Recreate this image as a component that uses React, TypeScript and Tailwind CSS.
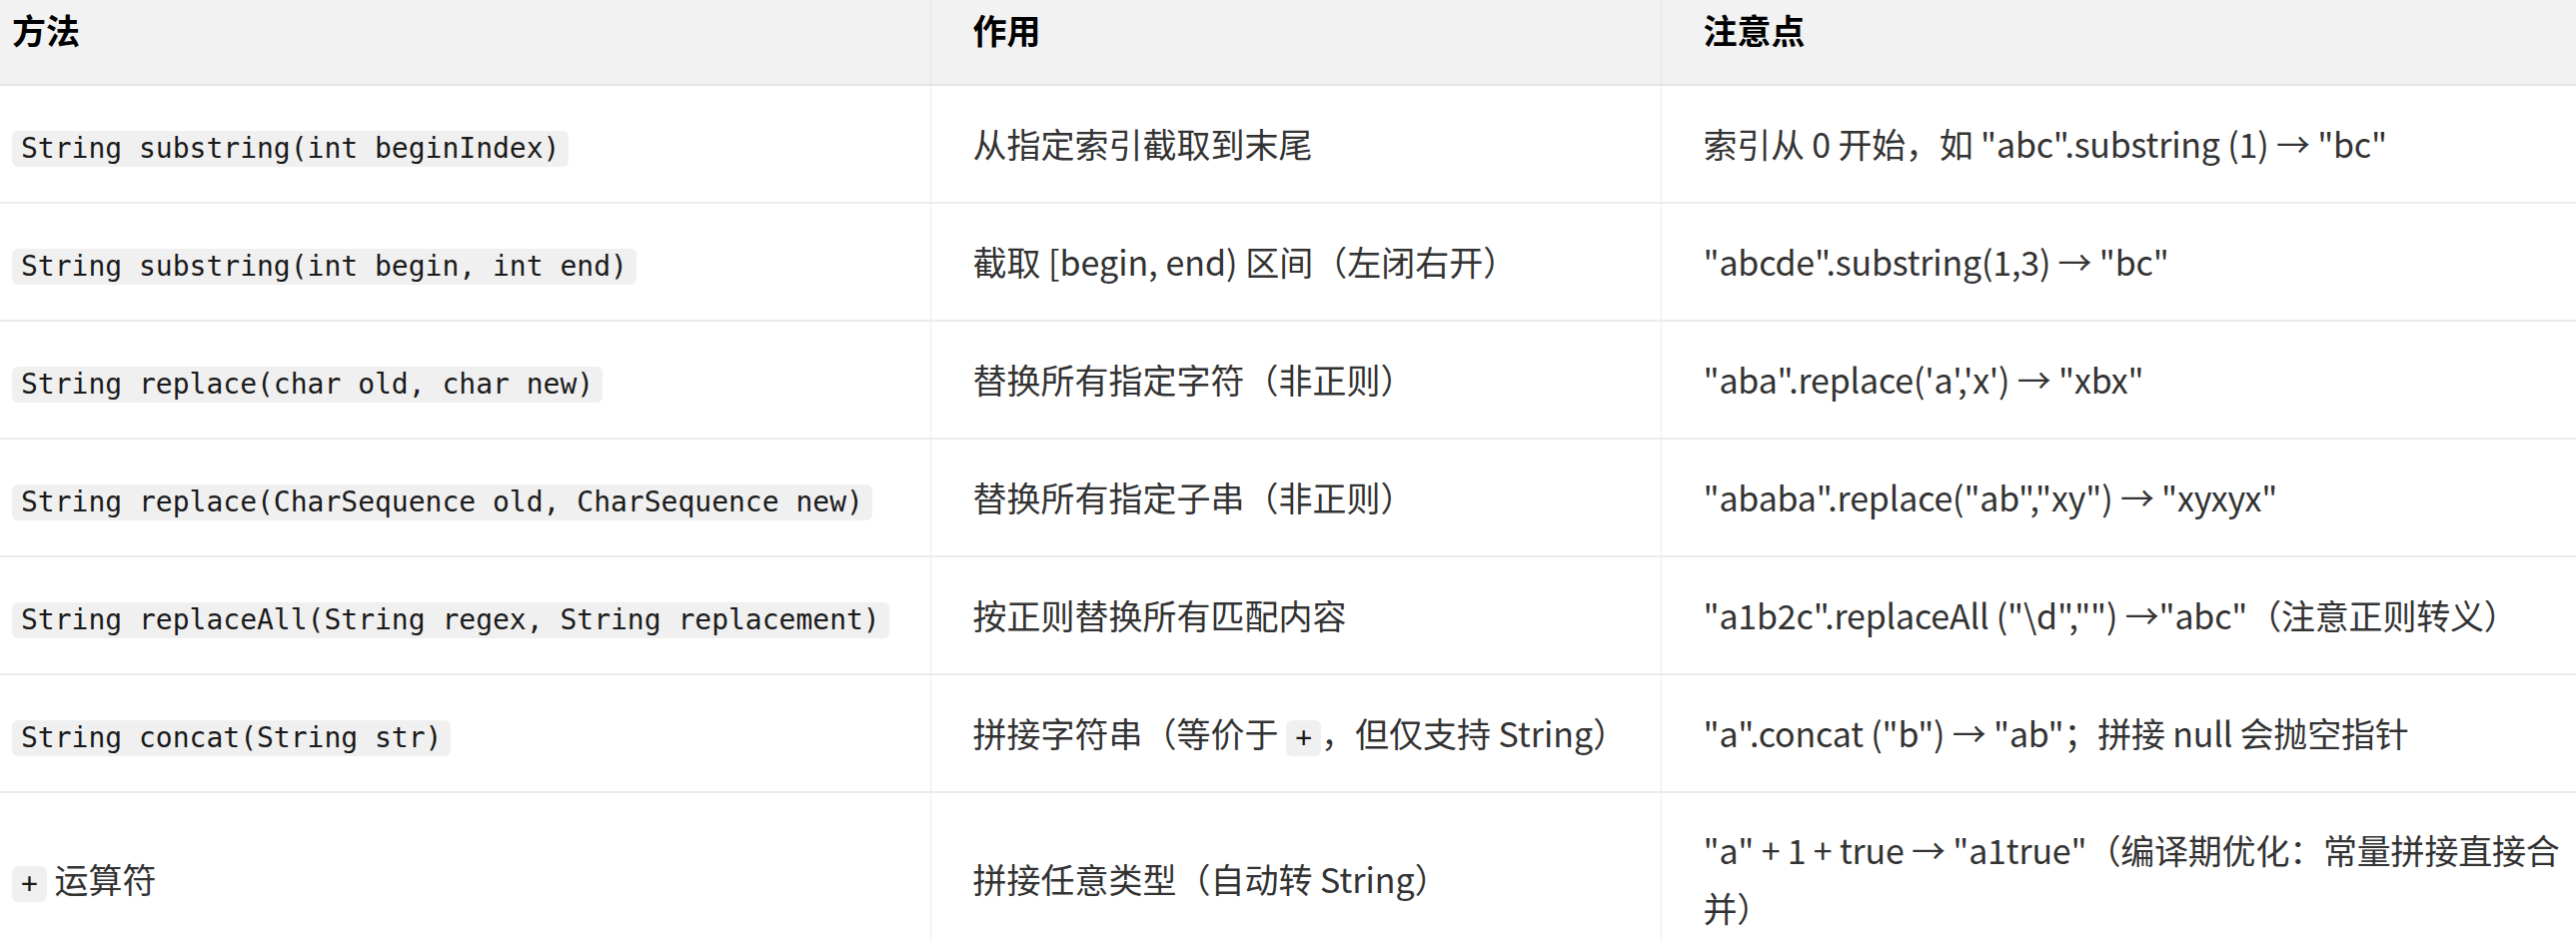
import type { ReactNode } from 'react';

type Row = {
  method: ReactNode;
  purpose: ReactNode;
  note: ReactNode;
};

function Code({ children }: { children: ReactNode }) {
  return (
    <code className="inline-block rounded-[6px] bg-[#f0f0f0] px-[9px] py-[4px] align-middle font-['DejaVu_Sans_Mono','Liberation_Mono',monospace] text-[28px] leading-[28px] text-[#1a1a1a]">
      {children}
    </code>
  );
}

const rows: Row[] = [
  {
    method: <Code>String substring(int beginIndex)</Code>,
    purpose: '从指定索引截取到末尾',
    note: '索引从 0 开始，如 "abc".substring (1) → "bc"',
  },
  {
    method: <Code>String substring(int begin, int end)</Code>,
    purpose: '截取 [begin, end) 区间（左闭右开）',
    note: '"abcde".substring(1,3) → "bc"',
  },
  {
    method: <Code>String replace(char old, char new)</Code>,
    purpose: '替换所有指定字符（非正则）',
    note: '"aba".replace(\'a\',\'x\') → "xbx"',
  },
  {
    method: <Code>String replace(CharSequence old, CharSequence new)</Code>,
    purpose: '替换所有指定子串（非正则）',
    note: '"ababa".replace("ab","xy") → "xyxyx"',
  },
  {
    method: <Code>String replaceAll(String regex, String replacement)</Code>,
    purpose: '按正则替换所有匹配内容',
    note: '"a1b2c".replaceAll ("\\d","") →"abc"（注意正则转义）',
  },
  {
    method: <Code>String concat(String str)</Code>,
    purpose: (
      <>
        拼接字符串（等价于 <Code>+</Code>，但仅支持 String）
      </>
    ),
    note: '"a".concat ("b") → "ab"；拼接 null 会抛空指针',
  },
  {
    method: (
      <>
        <Code>+</Code> 运算符
      </>
    ),
    purpose: '拼接任意类型（自动转 String）',
    note: '"a" + 1 + true → "a1true"（编译期优化：常量拼接直接合并）',
  },
];

export default function App() {
  return (
    <div className="min-h-screen bg-white font-['Noto_Sans_CJK_SC','Noto_Sans',sans-serif] text-[34px] text-[#333333]">
      <table className="w-[2578px] table-fixed border-collapse">
        <colgroup>
          <col className="w-[931px]" />
          <col className="w-[731px]" />
          <col />
        </colgroup>
        <thead>
          <tr className="h-[85px] bg-[#f2f2f2]">
            <th className="border-b-2 border-[#e3e3e3] pl-[12px] pb-[24px] text-left align-top text-[34px] font-bold leading-[60px] text-black">
              方法
            </th>
            <th className="border-b-2 border-l border-[#e3e3e3] pl-[42px] pb-[24px] text-left align-top text-[34px] font-bold leading-[60px] text-black">
              作用
            </th>
            <th className="border-b-2 border-l border-[#e3e3e3] pl-[42px] pb-[24px] text-left align-top text-[34px] font-bold leading-[60px] text-black">
              注意点
            </th>
          </tr>
        </thead>
        <tbody>
          {rows.map((row, idx) => (
            <tr key={idx} className="border-b-2 border-[#ebebeb]">
              <td className="py-[28px] pl-[12px] pr-[12px] align-middle leading-[60px]">{row.method}</td>
              <td className="border-l border-[#ebebeb] py-[28px] pl-[42px] pr-[12px] align-middle leading-[60px]">
                {row.purpose}
              </td>
              <td className="border-l border-[#ebebeb] py-[28px] pl-[42px] pr-[2px] align-middle leading-[58px] tracking-[-0.2px]">
                {row.note}
              </td>
            </tr>
          ))}
        </tbody>
      </table>
    </div>
  );
}
